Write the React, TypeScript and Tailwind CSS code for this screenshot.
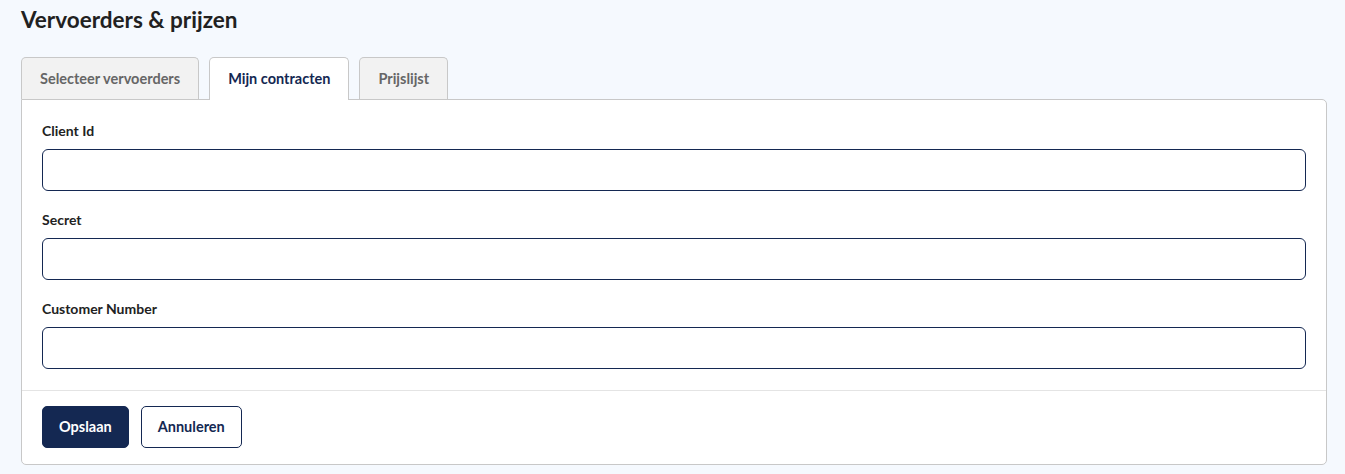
import React from 'react';

const tabs = ['Selecteer vervoerders', 'Mijn contracten', 'Prijslijst'];
const fields = ['Client Id', 'Secret', 'Customer Number'];

export default function App() {
  const active = 1;
  return (
    <div
      className="min-h-[474px] bg-[#f5f9fe] pl-[21px] pr-[18px] pt-[3px] pb-[9px] text-[#222]"
      style={{ fontFamily: 'Lato, "Noto Sans", sans-serif' }}
    >
      <h1 className="text-[22.5px] font-bold leading-[34px] text-[#212121]">Vervoerders &amp; prijzen</h1>

      {/* tabs */}
      <div className="mt-[20px] flex gap-[10px]">
        {tabs.map((t, i) => (
          <div
            key={t}
            className={
              i === active
                ? 'relative z-10 -mb-px flex h-[43px] items-center rounded-t-[5px] border border-b-0 border-[#c8c8c8] bg-white px-[18px] text-[14.5px] font-bold text-[#142852]'
                : 'flex h-[42px] items-center rounded-t-[5px] border border-b-0 border-[#c8c8c8] bg-[#f2f2f2] px-[18px] text-[14.5px] font-bold text-[#666]'
            }
          >
            {t}
          </div>
        ))}
      </div>

      {/* panel */}
      <div className="rounded-b-[5px] rounded-tr-[5px] border border-[#c8c8c8] bg-white">
        <div className="flex flex-col gap-[18px] px-5 pt-5 pb-[21px]">
          {fields.map((f) => (
            <div key={f}>
              <label className="mb-2 block text-[14px] font-bold leading-[21px] text-[#222]">{f}</label>
              <input className="block h-[42px] w-full rounded-[6px] border border-[#142852] bg-white px-3 text-[14px] outline-none" />
            </div>
          ))}
        </div>
        <div className="flex gap-3 border-t border-[#e4e4e4] px-5 pt-[15px] pb-4">
          <button className="h-[42px] rounded-[5px] border border-[#142852] bg-[#142852] px-4 text-[14.5px] font-bold text-white">
            Opslaan
          </button>
          <button className="h-[42px] rounded-[5px] border border-[#142852] bg-white px-4 text-[14.5px] font-bold text-[#142852]">
            Annuleren
          </button>
        </div>
      </div>
    </div>
  );
}
